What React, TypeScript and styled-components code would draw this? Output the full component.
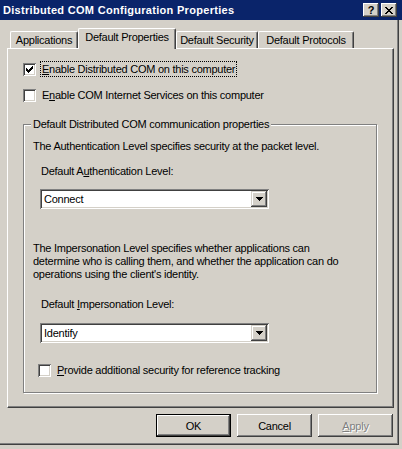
import React from "react";
import styled, { createGlobalStyle } from "styled-components";

const Global = createGlobalStyle`
  html, body { margin: 0; padding: 0; background: #d4d0c8; }
  body {
    width: 402px; height: 449px; overflow: hidden;
    font-family: "Liberation Sans", Arial, sans-serif;
    font-size: 11px; color: #000;
  }
  * { box-sizing: border-box; }
`;

const Screen = styled.div`
  width: 402px;
  height: 449px;
  background: #d4d0c8;
  display: flex;
  flex-direction: column;
`;

const TitleBar = styled.div`
  height: 20px;
  background: #0a246a;
  display: flex;
  align-items: center;
  padding: 0 5px 0 3px;
`;

const TitleText = styled.div`
  flex: 1;
  color: #fff;
  font-weight: bold;
  font-size: 11px;
  letter-spacing: 0.3px;
  white-space: nowrap;
  line-height: 20px;
`;

const CaptionButtons = styled.div`
  display: flex;
  gap: 2px;
`;

const CaptionButton = styled.div`
  width: 16px;
  height: 14px;
  background: #d4d0c8;
  box-shadow: inset -1px -1px #404040, inset 1px 1px #fff, inset -2px -2px #808080;
  display: flex;
  align-items: center;
  justify-content: center;
  font-weight: bold;
  font-size: 11px;
  line-height: 14px;
  color: #000;
`;

const Frame = styled.div`
  width: 399px;
  height: 425px;
  border-right: 1px solid #404040;
  border-bottom: 1px solid #404040;
  box-shadow: inset -1px -1px #808080;
  padding: 8px 0 0 7px;
  display: flex;
  flex-direction: column;
`;

const TabStrip = styled.div`
  height: 20px;
  display: flex;
  align-items: flex-end;
  padding-left: 3px;
  position: relative;
  z-index: 1;
`;

const Tab = styled.div<{ $selected?: boolean; $w: number }>`
  width: ${(p) => p.$w}px;
  height: ${(p) => (p.$selected ? 21 : 17)}px;
  margin-bottom: ${(p) => (p.$selected ? -1 : 0)}px;
  background: #d4d0c8;
  border-top: 1px solid #fff;
  border-left: 1px solid #fff;
  border-right: 1px solid #404040;
  border-radius: 2px 2px 0 0;
  box-shadow: inset -1px 0 #808080;
  padding-top: ${(p) => (p.$selected ? 2 : 2)}px;
  line-height: 13px;
  letter-spacing: -0.25px;
  white-space: nowrap;
  text-align: center;
  position: relative;
  z-index: ${(p) => (p.$selected ? 2 : 1)};
`;

const Panel = styled.div`
  width: 387px;
  height: 360px;
  border-top: 1px solid #fff;
  border-left: 1px solid #fff;
  border-right: 1px solid #404040;
  border-bottom: 1px solid #404040;
  box-shadow: inset -1px -1px #808080;
  padding: 12px 0 0 15px;
  display: flex;
  flex-direction: column;
  align-items: flex-start;
`;

const CheckRow = styled.div<{ $top?: number; $left?: number }>`
  height: 16px;
  display: flex;
  align-items: center;
  gap: 4px;
  margin-top: ${(p) => p.$top ?? 0}px;
  margin-left: ${(p) => p.$left ?? 0}px;
`;

const Box = styled.div`
  width: 13px;
  height: 13px;
  background: #fff;
  box-shadow: inset 1px 1px #808080, inset -1px -1px #fff, inset 2px 2px #404040,
    inset -2px -2px #d4d0c8;
  display: flex;
  align-items: center;
  justify-content: center;
  flex: none;
`;

const CheckLabel = styled.span<{ $focused?: boolean }>`
  height: 16px;
  line-height: 14px;
  padding: 0 1px;
  border: 1px dotted ${(p) => (p.$focused ? "#000" : "transparent")};
  letter-spacing: -0.25px;
  white-space: nowrap;
`;

const Group = styled.div`
  position: relative;
  width: 354px;
  margin-top: 21px;
  border: 1px solid #808080;
  box-shadow: inset 1px 1px #fff, 1px 1px #fff;
  padding: 15px 0 14px 9px;
  display: flex;
  flex-direction: column;
  align-items: flex-start;
`;

const Legend = styled.span`
  position: absolute;
  top: -7px;
  left: 7px;
  padding: 0 2px;
  background: #d4d0c8;
  line-height: 13px;
  letter-spacing: -0.25px;
  white-space: nowrap;
`;

const Para = styled.div<{ $top?: number; $left?: number }>`
  margin-top: ${(p) => p.$top ?? 0}px;
  margin-left: ${(p) => p.$left ?? 0}px;
  line-height: 13px;
  letter-spacing: -0.25px;
  white-space: nowrap;
`;

const Combo = styled.div<{ $top: number }>`
  margin-top: ${(p) => p.$top}px;
  margin-left: 7px;
  width: 229px;
  height: 20px;
  background: #fff;
  box-shadow: inset 1px 1px #808080, inset -1px -1px #fff, inset 2px 2px #404040,
    inset -2px -2px #d4d0c8;
  padding: 2px;
  display: flex;
  align-items: center;
`;

const ComboText = styled.div`
  flex: 1;
  padding-left: 2px;
  line-height: 16px;
  letter-spacing: -0.25px;
`;

const DropButton = styled.div`
  width: 16px;
  height: 16px;
  background: #d4d0c8;
  box-shadow: inset -1px -1px #404040, inset 1px 1px #d4d0c8, inset -2px -2px #808080,
    inset 2px 2px #fff;
  display: flex;
  align-items: center;
  justify-content: center;
`;

const ButtonRow = styled.div`
  display: flex;
  justify-content: flex-end;
  gap: 6px;
  margin-top: 6px;
  padding-right: 5px;
`;

const Button = styled.div<{ $default?: boolean; $disabled?: boolean }>`
  width: 75px;
  height: 23px;
  background: #d4d0c8;
  border: ${(p) => (p.$default ? "1px solid #000" : "none")};
  box-shadow: ${(p) =>
    p.$default
      ? "inset -1px -1px #404040, inset 1px 1px #fff, inset -2px -2px #808080"
      : "inset -1px -1px #404040, inset 1px 1px #fff, inset -2px -2px #808080"};
  display: flex;
  align-items: center;
  justify-content: center;
  letter-spacing: -0.25px;
  color: ${(p) => (p.$disabled ? "#808080" : "#000")};
  text-shadow: ${(p) => (p.$disabled ? "1px 1px #fff" : "none")};
`;

const CheckMark = () => (
  <svg width="7" height="7" viewBox="0 0 7 7" shapeRendering="crispEdges">
    <rect x="0" y="2" width="1" height="3" fill="#000" />
    <rect x="1" y="3" width="1" height="3" fill="#000" />
    <rect x="2" y="4" width="1" height="3" fill="#000" />
    <rect x="3" y="3" width="1" height="3" fill="#000" />
    <rect x="4" y="2" width="1" height="3" fill="#000" />
    <rect x="5" y="1" width="1" height="3" fill="#000" />
    <rect x="6" y="0" width="1" height="3" fill="#000" />
  </svg>
);

const CloseGlyph = () => (
  <svg width="8" height="7" viewBox="0 0 8 7" shapeRendering="crispEdges">
    <rect x="0" y="0" width="2" height="1" fill="#000" />
    <rect x="6" y="0" width="2" height="1" fill="#000" />
    <rect x="1" y="1" width="2" height="1" fill="#000" />
    <rect x="5" y="1" width="2" height="1" fill="#000" />
    <rect x="2" y="2" width="4" height="1" fill="#000" />
    <rect x="3" y="3" width="2" height="1" fill="#000" />
    <rect x="2" y="4" width="4" height="1" fill="#000" />
    <rect x="1" y="5" width="2" height="1" fill="#000" />
    <rect x="5" y="5" width="2" height="1" fill="#000" />
    <rect x="0" y="6" width="2" height="1" fill="#000" />
    <rect x="6" y="6" width="2" height="1" fill="#000" />
  </svg>
);

const Arrow = () => (
  <svg width="7" height="4" viewBox="0 0 7 4" shapeRendering="crispEdges">
    <rect x="0" y="0" width="7" height="1" fill="#000" />
    <rect x="1" y="1" width="5" height="1" fill="#000" />
    <rect x="2" y="2" width="3" height="1" fill="#000" />
    <rect x="3" y="3" width="1" height="1" fill="#000" />
  </svg>
);

export default function App() {
  return (
    <Screen>
      <Global />
      <TitleBar>
        <TitleText>Distributed COM Configuration Properties</TitleText>
        <CaptionButtons>
          <CaptionButton>?</CaptionButton>
          <CaptionButton>
            <CloseGlyph />
          </CaptionButton>
        </CaptionButtons>
      </TitleBar>
      <Frame>
        <TabStrip>
          <Tab $w={68}>Applications</Tab>
          <Tab $w={98} $selected>
            Default Properties
          </Tab>
          <Tab $w={82}>Default Security</Tab>
          <Tab $w={96}>Default Protocols</Tab>
        </TabStrip>
        <Panel>
          <CheckRow>
            <Box>
              <CheckMark />
            </Box>
            <CheckLabel $focused>
              <u>E</u>nable Distributed COM on this computer
            </CheckLabel>
          </CheckRow>
          <CheckRow $top={10}>
            <Box />
            <CheckLabel>
              E<u>n</u>able COM Internet Services on this computer
            </CheckLabel>
          </CheckRow>
          <Group>
            <Legend>Default Distributed COM communication properties</Legend>
            <Para>The Authentication Level specifies security at the packet level.</Para>
            <Para $top={12} $left={8}>
              Default A<u>u</u>thentication Level:
            </Para>
            <Combo $top={11}>
              <ComboText>Connect</ComboText>
              <DropButton>
                <Arrow />
              </DropButton>
            </Combo>
            <Para $top={33}>
              The Impersonation Level specifies whether applications can
              <br />
              determine who is calling them, and whether the application can do
              <br />
              operations using the client's identity.
            </Para>
            <Para $top={17} $left={8}>
              Default <u>I</u>mpersonation Level:
            </Para>
            <Combo $top={12}>
              <ComboText>Identify</ComboText>
              <DropButton>
                <Arrow />
              </DropButton>
            </Combo>
            <CheckRow $top={19} $left={5}>
              <Box />
              <CheckLabel>
                <u>P</u>rovide additional security for reference tracking
              </CheckLabel>
            </CheckRow>
          </Group>
        </Panel>
        <ButtonRow>
          <Button $default>OK</Button>
          <Button>Cancel</Button>
          <Button $disabled>
            <u>A</u>pply
          </Button>
        </ButtonRow>
      </Frame>
    </Screen>
  );
}
